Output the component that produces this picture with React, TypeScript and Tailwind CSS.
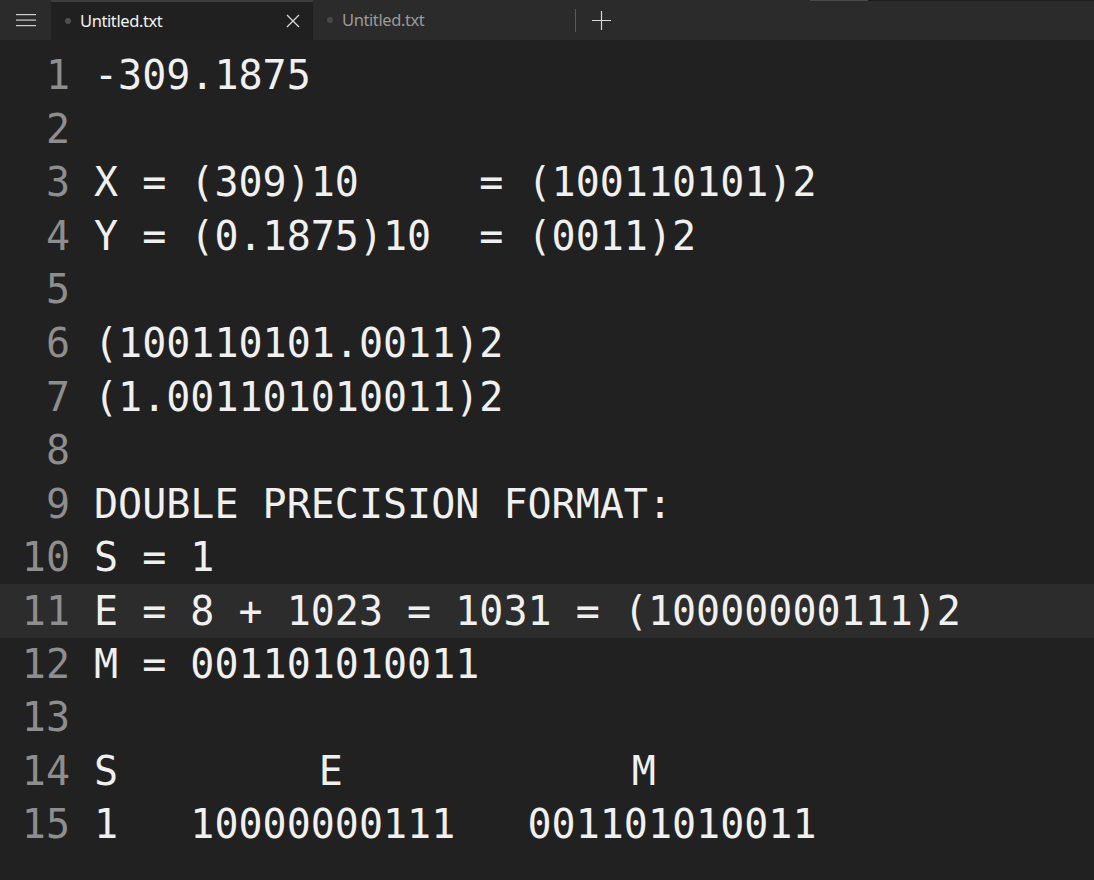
import React from "react";

const lines: React.ReactNode[] = [
  "-309.1875",
  "",
  "X = (309)10     = (100110101)2",
  "Y = (0.1875)10  = (0011)2",
  "",
  "(100110101.0011)2",
  "(1.001101010011)2",
  "",
  "DOUBLE PRECISION FORMAT:",
  "S = 1",
  "E = 8 + 1023 = 1031 = (10000000111)2",
  "M = 001101010011",
  "",
  <>
    {"S        "}
    <span className="inline-block w-[8px]" />
    {"E            M"}
  </>,
  "1   10000000111   001101010011",
];

export default function App() {
  return (
    <div className="w-[1094px] h-[880px] overflow-hidden bg-[#212121] flex flex-col">
      {/* Tab bar */}
      <div className="relative h-[40px] bg-[#2b2b2b] flex items-stretch shrink-0" style={{ fontFamily: '"Noto Sans", "Open Sans", sans-serif' }}>
        <div className="absolute top-0 left-[810px] w-[58px] h-[1px] bg-[#4a4a4a]" />
        <div className="absolute top-0 left-[868px] right-0 h-[1px] bg-[#1e1e1e]" />
        <div className="w-[51px] flex items-center justify-center">
          <svg width="20" height="13" viewBox="0 0 20 13">
            <rect x="0" y="0" width="20" height="1.2" fill="#d0d0d0" />
            <rect x="0" y="5.5" width="20" height="1.2" fill="#d0d0d0" />
            <rect x="0" y="11" width="20" height="1.2" fill="#d0d0d0" />
          </svg>
        </div>
        <div className="w-[262px] bg-[#202020] border-t-2 border-[#3d3d3d] flex items-center pl-[14px] pr-[13px]">
          <span className="w-[6px] h-[6px] rounded-full bg-[#4f4f4f] mr-[9px]" />
          <span className="text-[16.5px] text-[#f2f2f2] tracking-[-0.4px] flex-1 mt-[1px]">Untitled.txt</span>
          <svg width="14" height="14" viewBox="0 0 14 14">
            <path d="M1 1 L13 13 M13 1 L1 13" stroke="#d8d8d8" strokeWidth="1.3" />
          </svg>
        </div>
        <div className="w-[262px] flex items-center pl-[14px]">
          <span className="w-[6px] h-[6px] rounded-full bg-[#474747] mr-[9px]" />
          <span className="text-[16.5px] text-[#9a9a9a] tracking-[-0.4px] mt-[1px]">Untitled.txt</span>
        </div>
        <div className="flex items-center">
          <div className="w-[1px] h-[23px] bg-[#5a5a5a]" />
          <div className="ml-[16px] w-[19px] h-[19px] flex items-center justify-center">
            <svg width="19" height="19" viewBox="0 0 19 19">
              <path d="M0 9.5 H19 M9.5 0 V19" stroke="#d8d8d8" strokeWidth="1.2" />
            </svg>
          </div>
        </div>
      </div>

      {/* Editor */}
      <div
        className="pt-[9px] text-[40px] leading-[53.6px]"
        style={{ fontFamily: '"DejaVu Sans Mono", "Liberation Mono", monospace' }}
      >
        {lines.map((l, i) => (
          <div
            key={i}
            className={`flex h-[53.6px] ${i === 10 ? "bg-[#2c2c2c] -mt-[1px] pt-[1px]" : ""}`}
          >
            <div className="w-[70px] text-right text-[#8e8e8e] shrink-0">{i + 1}</div>
            <div className="pl-[24px] whitespace-pre text-[#f0f0f0]">{l}</div>
          </div>
        ))}
      </div>
    </div>
  );
}
